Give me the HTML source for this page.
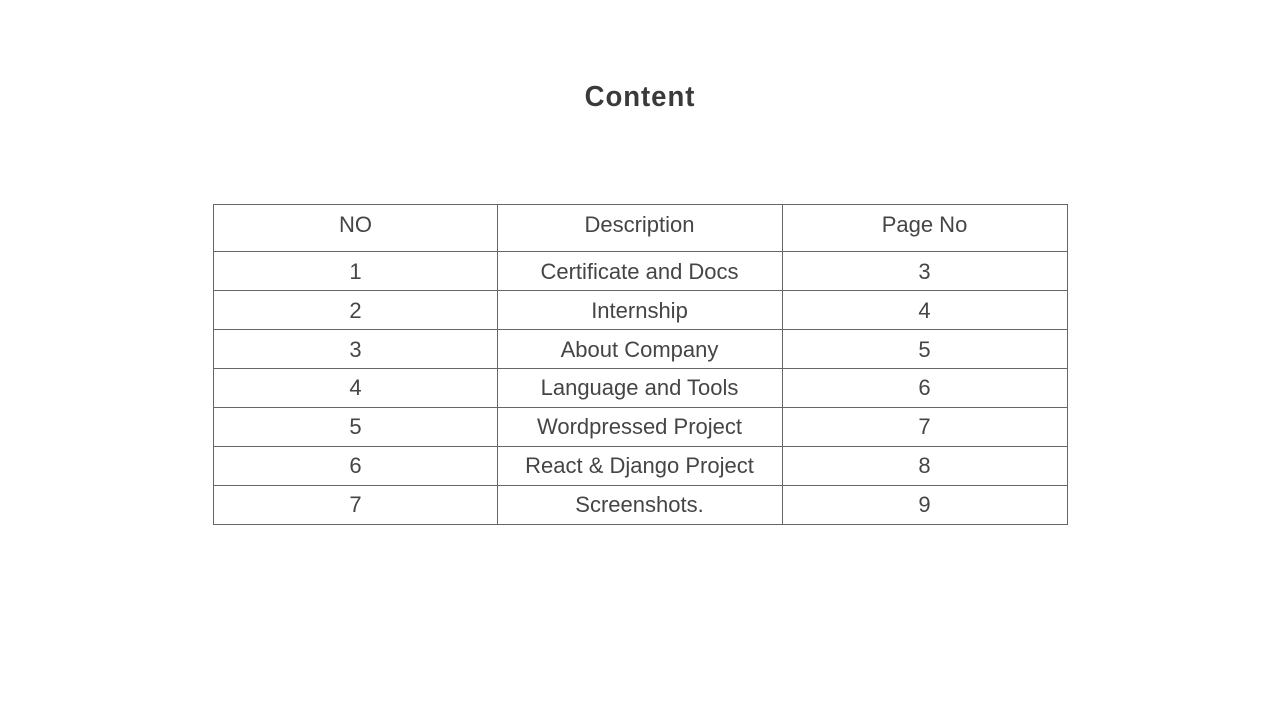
<!DOCTYPE html>
<html><head><style>
body{margin:0;width:1280px;height:720px;background:#fff;position:relative;overflow:hidden;font-family:"Liberation Sans",sans-serif}
.t{position:absolute;left:0;width:1280px;top:81px;text-align:center;font-size:29px;font-weight:bold;color:#3a3a3a;letter-spacing:1px;transform:scaleX(0.95)}
.h{position:absolute;left:213px;width:855px;height:1px;background:#666}
.v{position:absolute;top:205px;height:320px;width:1px;background:#666}
.c{position:absolute;width:285px;text-align:center;font-size:22px;color:#454545;line-height:24px}
</style></head><body>
<div class="t">Content</div>
<div class="h" style="top:204px"></div>
<div class="h" style="top:251px"></div>
<div class="h" style="top:290px"></div>
<div class="h" style="top:329px"></div>
<div class="h" style="top:368px"></div>
<div class="h" style="top:407px"></div>
<div class="h" style="top:446px"></div>
<div class="h" style="top:485px"></div>
<div class="h" style="top:524px"></div>
<div class="v" style="left:213px"></div>
<div class="v" style="left:497px"></div>
<div class="v" style="left:782px"></div>
<div class="v" style="left:1067px"></div>
<div class="c" style="left:213px;top:213px">NO</div>
<div class="c" style="left:497px;top:213px">Description</div>
<div class="c" style="left:782px;top:213px">Page No</div>

<div class="c" style="left:213px;top:260px">1</div>
<div class="c" style="left:497px;top:260px">Certificate and Docs</div>
<div class="c" style="left:782px;top:260px">3</div>

<div class="c" style="left:213px;top:299px">2</div>
<div class="c" style="left:497px;top:299px">Internship</div>
<div class="c" style="left:782px;top:299px">4</div>

<div class="c" style="left:213px;top:338px">3</div>
<div class="c" style="left:497px;top:338px">About Company</div>
<div class="c" style="left:782px;top:338px">5</div>

<div class="c" style="left:213px;top:376px">4</div>
<div class="c" style="left:497px;top:376px">Language and Tools</div>
<div class="c" style="left:782px;top:376px">6</div>

<div class="c" style="left:213px;top:415px">5</div>
<div class="c" style="left:497px;top:415px">Wordpressed Project</div>
<div class="c" style="left:782px;top:415px">7</div>

<div class="c" style="left:213px;top:454px">6</div>
<div class="c" style="left:497px;top:454px">React &amp; Django Project</div>
<div class="c" style="left:782px;top:454px">8</div>

<div class="c" style="left:213px;top:493px">7</div>
<div class="c" style="left:497px;top:493px">Screenshots.</div>
<div class="c" style="left:782px;top:493px">9</div>
</body></html>
